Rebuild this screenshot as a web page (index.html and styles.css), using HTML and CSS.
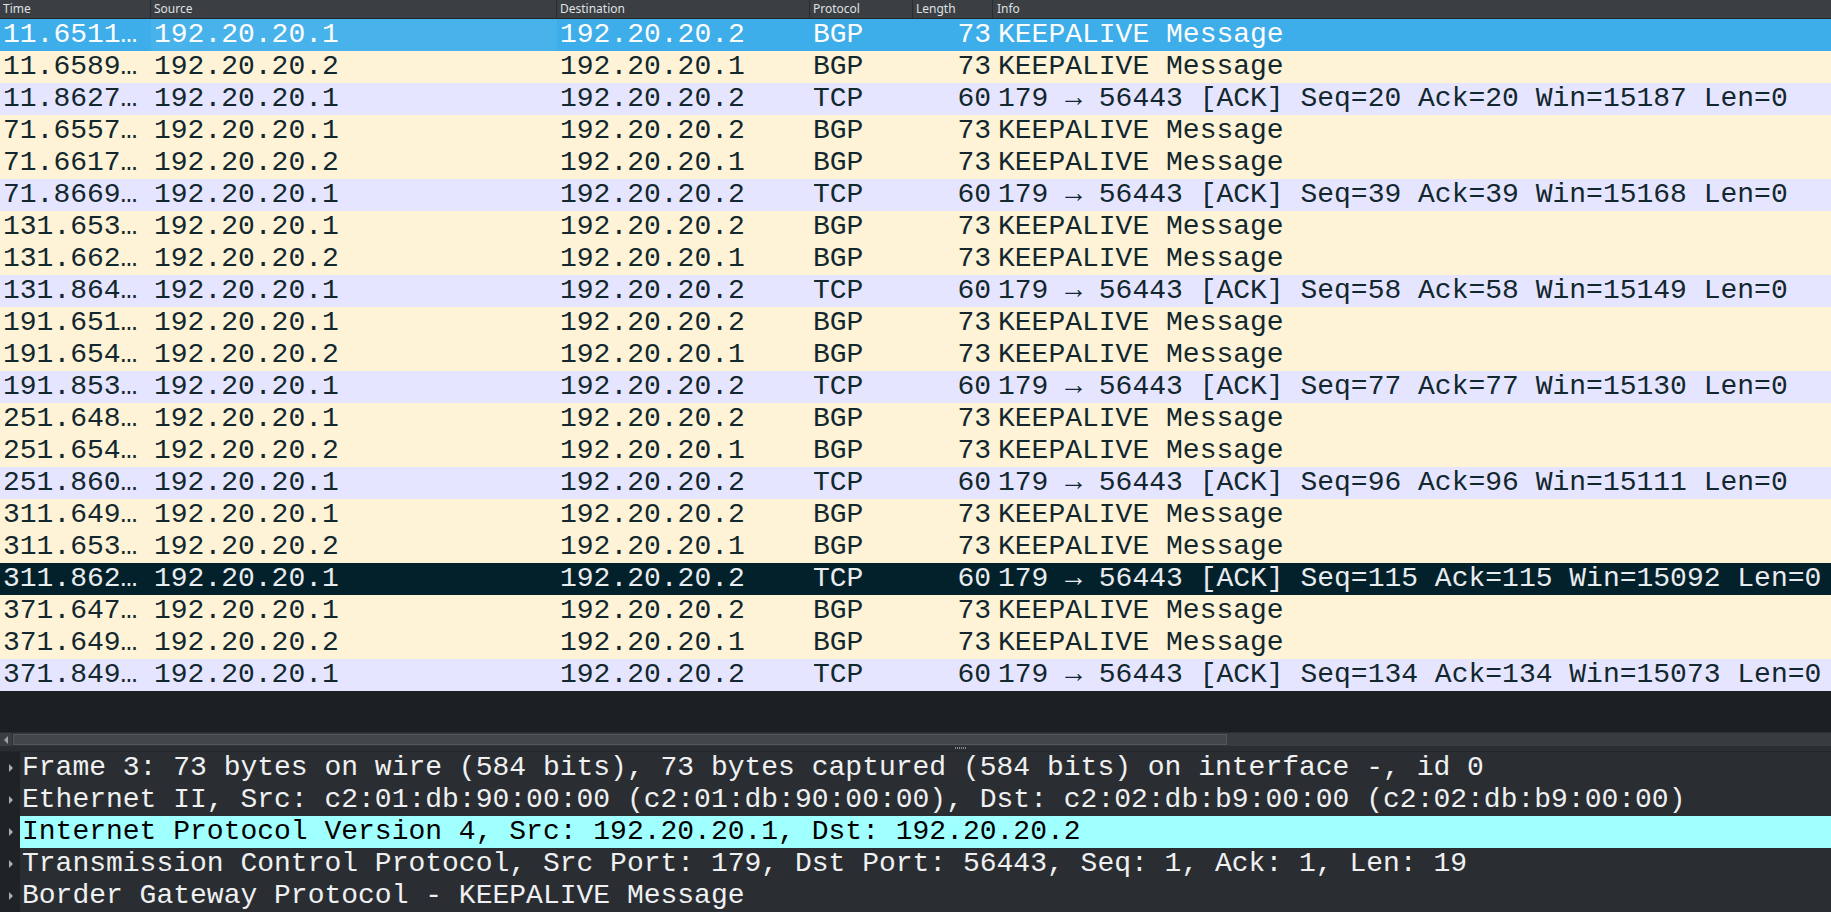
FILE: index.html
```html
<!DOCTYPE html>
<html>
<head>
<meta charset="utf-8">
<link rel="stylesheet" href="styles.css">
</head>
<body>
<div class="app">
  <div class="list">
    <div class="hdr">
      <div class="hc">Time</div>
      <div class="hc">Source</div>
      <div class="hc">Destination</div>
      <div class="hc">Protocol</div>
      <div class="hc">Length</div>
      <div class="hc last">Info</div>
    </div>
    <div class="rows">
      <div class="row sel"><span class="c">11.6511…</span><span class="c cur">192.20.20.1</span><span class="c">192.20.20.2</span><span class="c">BGP</span><span class="c r">73</span><span class="c i">KEEPALIVE Message</span></div>
      <div class="row bgp"><span class="c">11.6589…</span><span class="c">192.20.20.2</span><span class="c">192.20.20.1</span><span class="c">BGP</span><span class="c r">73</span><span class="c i">KEEPALIVE Message</span></div>
      <div class="row tcp"><span class="c">11.8627…</span><span class="c">192.20.20.1</span><span class="c">192.20.20.2</span><span class="c">TCP</span><span class="c r">60</span><span class="c i">179 → 56443 [ACK] Seq=20 Ack=20 Win=15187 Len=0</span></div>
      <div class="row bgp"><span class="c">71.6557…</span><span class="c">192.20.20.1</span><span class="c">192.20.20.2</span><span class="c">BGP</span><span class="c r">73</span><span class="c i">KEEPALIVE Message</span></div>
      <div class="row bgp"><span class="c">71.6617…</span><span class="c">192.20.20.2</span><span class="c">192.20.20.1</span><span class="c">BGP</span><span class="c r">73</span><span class="c i">KEEPALIVE Message</span></div>
      <div class="row tcp"><span class="c">71.8669…</span><span class="c">192.20.20.1</span><span class="c">192.20.20.2</span><span class="c">TCP</span><span class="c r">60</span><span class="c i">179 → 56443 [ACK] Seq=39 Ack=39 Win=15168 Len=0</span></div>
      <div class="row bgp"><span class="c">131.653…</span><span class="c">192.20.20.1</span><span class="c">192.20.20.2</span><span class="c">BGP</span><span class="c r">73</span><span class="c i">KEEPALIVE Message</span></div>
      <div class="row bgp"><span class="c">131.662…</span><span class="c">192.20.20.2</span><span class="c">192.20.20.1</span><span class="c">BGP</span><span class="c r">73</span><span class="c i">KEEPALIVE Message</span></div>
      <div class="row tcp"><span class="c">131.864…</span><span class="c">192.20.20.1</span><span class="c">192.20.20.2</span><span class="c">TCP</span><span class="c r">60</span><span class="c i">179 → 56443 [ACK] Seq=58 Ack=58 Win=15149 Len=0</span></div>
      <div class="row bgp"><span class="c">191.651…</span><span class="c">192.20.20.1</span><span class="c">192.20.20.2</span><span class="c">BGP</span><span class="c r">73</span><span class="c i">KEEPALIVE Message</span></div>
      <div class="row bgp"><span class="c">191.654…</span><span class="c">192.20.20.2</span><span class="c">192.20.20.1</span><span class="c">BGP</span><span class="c r">73</span><span class="c i">KEEPALIVE Message</span></div>
      <div class="row tcp"><span class="c">191.853…</span><span class="c">192.20.20.1</span><span class="c">192.20.20.2</span><span class="c">TCP</span><span class="c r">60</span><span class="c i">179 → 56443 [ACK] Seq=77 Ack=77 Win=15130 Len=0</span></div>
      <div class="row bgp"><span class="c">251.648…</span><span class="c">192.20.20.1</span><span class="c">192.20.20.2</span><span class="c">BGP</span><span class="c r">73</span><span class="c i">KEEPALIVE Message</span></div>
      <div class="row bgp"><span class="c">251.654…</span><span class="c">192.20.20.2</span><span class="c">192.20.20.1</span><span class="c">BGP</span><span class="c r">73</span><span class="c i">KEEPALIVE Message</span></div>
      <div class="row tcp"><span class="c">251.860…</span><span class="c">192.20.20.1</span><span class="c">192.20.20.2</span><span class="c">TCP</span><span class="c r">60</span><span class="c i">179 → 56443 [ACK] Seq=96 Ack=96 Win=15111 Len=0</span></div>
      <div class="row bgp"><span class="c">311.649…</span><span class="c">192.20.20.1</span><span class="c">192.20.20.2</span><span class="c">BGP</span><span class="c r">73</span><span class="c i">KEEPALIVE Message</span></div>
      <div class="row bgp"><span class="c">311.653…</span><span class="c">192.20.20.2</span><span class="c">192.20.20.1</span><span class="c">BGP</span><span class="c r">73</span><span class="c i">KEEPALIVE Message</span></div>
      <div class="row dark"><span class="c">311.862…</span><span class="c">192.20.20.1</span><span class="c">192.20.20.2</span><span class="c">TCP</span><span class="c r">60</span><span class="c i">179 → 56443 [ACK] Seq=115 Ack=115 Win=15092 Len=0</span></div>
      <div class="row bgp"><span class="c">371.647…</span><span class="c">192.20.20.1</span><span class="c">192.20.20.2</span><span class="c">BGP</span><span class="c r">73</span><span class="c i">KEEPALIVE Message</span></div>
      <div class="row bgp"><span class="c">371.649…</span><span class="c">192.20.20.2</span><span class="c">192.20.20.1</span><span class="c">BGP</span><span class="c r">73</span><span class="c i">KEEPALIVE Message</span></div>
      <div class="row tcp"><span class="c">371.849…</span><span class="c">192.20.20.1</span><span class="c">192.20.20.2</span><span class="c">TCP</span><span class="c r">60</span><span class="c i">179 → 56443 [ACK] Seq=134 Ack=134 Win=15073 Len=0</span></div>
    </div>
    <div class="empty"></div>
    <div class="hscroll">
      <div class="sbtn"><span class="larrow"></span></div>
      <div class="thumb"></div>
      <div class="track"></div>
    </div>
  </div>
  <div class="splitter"><span class="grip"></span></div>
  <div class="tree">
    <div class="trow"><span class="gut"><span class="tri"></span></span><span class="tt">Frame 3: 73 bytes on wire (584 bits), 73 bytes captured (584 bits) on interface -, id 0</span></div>
    <div class="trow"><span class="gut"><span class="tri"></span></span><span class="tt">Ethernet II, Src: c2:01:db:90:00:00 (c2:01:db:90:00:00), Dst: c2:02:db:b9:00:00 (c2:02:db:b9:00:00)</span></div>
    <div class="trow hl"><span class="gut"><span class="tri"></span></span><span class="tt">Internet Protocol Version 4, Src: 192.20.20.1, Dst: 192.20.20.2</span></div>
    <div class="trow"><span class="gut"><span class="tri"></span></span><span class="tt">Transmission Control Protocol, Src Port: 179, Dst Port: 56443, Seq: 1, Ack: 1, Len: 19</span></div>
    <div class="trow"><span class="gut"><span class="tri"></span></span><span class="tt">Border Gateway Protocol - KEEPALIVE Message</span></div>
  </div>
</div>
</body>
</html>
```
FILE: styles.css
```css
html, body {
  margin: 0;
  padding: 0;
  background: #1d2023;
}
.app {
  width: 1831px;
  height: 912px;
  display: flex;
  flex-direction: column;
  overflow: hidden;
}
.list {
  display: flex;
  flex-direction: column;
  height: 746px;
  flex: none;
}
.hdr {
  display: grid;
  grid-template-columns: 151px 406px 253px 103px 80px 1fr;
  height: 18px;
  background: #3b3e42;
  border-bottom: 1px solid #232629;
  font-family: "Noto Sans", sans-serif;
  font-size: 12px;
  line-height: 18px;
  color: #dfe1e3;
}
.hc {
  padding-left: 3px;
  border-right: 1px solid #2a2d30;
  white-space: nowrap;
  overflow: hidden;
}
.hc.last { border-right: none; padding-left: 4px; }
.rows {
  display: flex;
  flex-direction: column;
  font-family: "Liberation Mono", "DejaVu Sans Mono", monospace;
  font-size: 28px;
  color: #12272e;
}
.row {
  display: grid;
  grid-template-columns: 151px 406px 253px 103px 80px 1fr;
  height: 32px;
  line-height: 32px;
}
.c {
  padding: 0 3px;
  white-space: nowrap;
  overflow: hidden;
}
.c.r { text-align: right; padding-right: 2px; }
.c.i { padding-left: 5px; }
.bgp { background: #fef3d6; }
.tcp { background: #e6e5ff; }
.sel { background: #3daee9; color: #fcfcfc; }
.sel .cur { background: #48b3eb; }
.dark { background: #02212b; color: #e9ecef; }
.empty {
  flex: 1;
  background: #1d2023;
}
.hscroll {
  height: 14px;
  display: flex;
  background: #33373b;
  border-top: 1px solid #2c2f32;
  box-sizing: border-box;
}
.sbtn {
  width: 12px;
  display: flex;
  align-items: center;
  justify-content: center;
  background: #3b3f43;
  border-right: 1px solid #2c2f32;
}
.larrow {
  width: 0;
  height: 0;
  border-top: 4px solid transparent;
  border-bottom: 4px solid transparent;
  border-right: 4px solid #9ea2a6;
}
.thumb {
  width: 1214px;
  margin: 1px 0;
  background: #43474c;
  border: 1px solid #54585d;
  box-sizing: border-box;
}
.track {
  flex: 1;
  background: #383c40;
}
.splitter {
  height: 6px;
  flex: none;
  background: #2a2e32;
  border-bottom: 1px solid #23262a;
  box-sizing: border-box;
  display: flex;
  justify-content: center;
  padding-left: 90px;
}
.grip {
  width: 12px;
  height: 2px;
  margin-top: 1px;
  background: repeating-linear-gradient(90deg, #8a8e92 0 1px, transparent 1px 2px);
}
.tree {
  flex: 1;
  background: #2a2e32;
  font-family: "Liberation Mono", "DejaVu Sans Mono", monospace;
  font-size: 28px;
  color: #eff0f1;
}
.trow {
  display: flex;
  height: 32px;
  line-height: 32px;
}
.gut {
  width: 20px;
  flex: none;
  background: #202326;
  display: flex;
  align-items: center;
  justify-content: center;
}
.tri {
  width: 0;
  height: 0;
  border-top: 4px solid transparent;
  border-bottom: 4px solid transparent;
  border-left: 4px solid #a9adb1;
  margin-left: 1px;
}
.tt {
  flex: 1;
  padding-left: 2px;
  white-space: nowrap;
  overflow: hidden;
}
.trow.hl .tt {
  background: #a0ffff;
  color: #000;
}
```
